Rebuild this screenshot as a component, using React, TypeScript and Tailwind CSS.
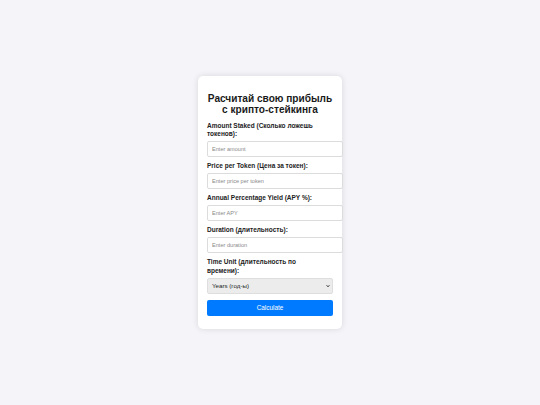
import React from "react";

const Label = ({ children }: { children: React.ReactNode }) => (
  <label className="block max-w-[121px] text-[6.5px] leading-[8.5px] font-bold text-[#222] mb-[2.5px]">
    {children}
  </label>
);

const Field = ({ label, placeholder }: { label: string; placeholder: string }) => (
  <div>
    <Label>{label}</Label>
    <input
      type="text"
      placeholder={placeholder}
      className="block box-border w-[136px] h-[16px] mb-[5px] px-[4px] text-[5.6px] bg-white border border-[#dcdcdc] rounded-[2px] outline-none placeholder:text-[#8a8a8a]"
    />
  </div>
);

export default function App() {
  return (
    <div className="min-h-[405px] w-full bg-[#f4f4f9] flex items-center justify-center font-['Liberation_Sans',Arial,sans-serif]">
      <div className="w-[144px] box-border bg-white rounded-[5px] shadow-[0_0_6px_rgba(0,0,0,0.12)] px-[9px] pt-[17px] pb-[13px]">
        <h2 className="text-[10.1px] leading-[11px] font-bold text-center text-[#1a1a1a] mb-[7px]">
          Расчитай свою прибыль с крипто-стейкинга
        </h2>
        <Field label="Amount Staked (Сколько ложешь токенов):" placeholder="Enter amount" />
        <Field label="Price per Token (Цена за токен):" placeholder="Enter price per token" />
        <Field label="Annual Percentage Yield (APY %):" placeholder="Enter APY" />
        <Field label="Duration (длительность):" placeholder="Enter duration" />
        <Label>Time Unit (длительность по времени):</Label>
        <div className="relative w-full">
          <select
            defaultValue="years"
            className="block appearance-none w-full h-[16.5px] px-[4px] text-[6.2px] text-[#222] bg-[#ececec] border border-[#dedede] rounded-[2px] outline-none"
          >
            <option value="years">Years (год-ы)</option>
            <option value="months">Months (месяц-ы)</option>
            <option value="days">Days (дни)</option>
          </select>
          <svg
            className="absolute right-[3px] top-[6.3px] w-[4px] h-[4px] pointer-events-none"
            viewBox="0 0 10 10"
          >
            <path d="M1.5 3 L5 7 L8.5 3" fill="none" stroke="#222" strokeWidth="2.2" />
          </svg>
        </div>
        <button className="block w-full h-[16px] mt-[6px] bg-[#007bff] text-white text-[6.4px] rounded-[2px]">
          Calculate
        </button>
      </div>
    </div>
  );
}
